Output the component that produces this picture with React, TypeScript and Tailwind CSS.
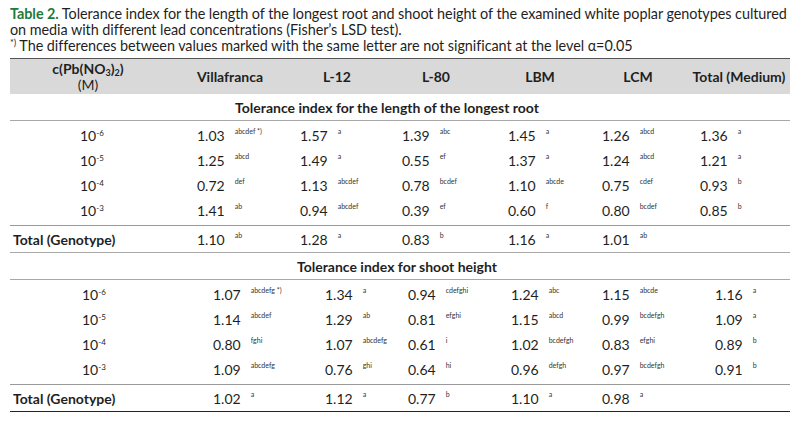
const rootRows = [
  { exp: '-6', vals: [['1.03', 'abcdef *)'], ['1.57', 'a'], ['1.39', 'abc'], ['1.45', 'a'], ['1.26', 'abcd'], ['1.36', 'a']] },
  { exp: '-5', vals: [['1.25', 'abcd'], ['1.49', 'a'], ['0.55', 'ef'], ['1.37', 'a'], ['1.24', 'abcd'], ['1.21', 'a']] },
  { exp: '-4', vals: [['0.72', 'def'], ['1.13', 'abcdef'], ['0.78', 'bcdef'], ['1.10', 'abcde'], ['0.75', 'cdef'], ['0.93', 'b']] },
  { exp: '-3', vals: [['1.41', 'ab'], ['0.94', 'abcdef'], ['0.39', 'ef'], ['0.60', 'f'], ['0.80', 'bcdef'], ['0.85', 'b']] },
];
const rootTotal = [['1.10', 'ab'], ['1.28', 'a'], ['0.83', 'b'], ['1.16', 'a'], ['1.01', 'ab']];

const shootRows = [
  { exp: '-6', vals: [['1.07', 'abcdefg *)'], ['1.34', 'a'], ['0.94', 'cdefghi'], ['1.24', 'abc'], ['1.15', 'abcde'], ['1.16', 'a']] },
  { exp: '-5', vals: [['1.14', 'abcdef'], ['1.29', 'ab'], ['0.81', 'efghi'], ['1.15', 'abcd'], ['0.99', 'bcdefgh'], ['1.09', 'a']] },
  { exp: '-4', vals: [['0.80', 'fghi'], ['1.07', 'abcdefg'], ['0.61', 'i'], ['1.02', 'bcdefgh'], ['0.83', 'efghi'], ['0.89', 'b']] },
  { exp: '-3', vals: [['1.09', 'abcdefg'], ['0.76', 'ghi'], ['0.64', 'hi'], ['0.96', 'defgh'], ['0.97', 'bcdefgh'], ['0.91', 'b']] },
];
const shootTotal = [['1.02', 'a'], ['1.12', 'a'], ['0.77', 'b'], ['1.10', 'a'], ['0.98', 'a']];

// column starts differ between the two halves of the table
const rootCols = ['w-[103px]', 'w-[102px]', 'w-[106px]', 'w-[94px]', 'w-[98px]', 'flex-1'];
const shootCols = ['w-[112px]', 'w-[83px]', 'w-[103px]', 'w-[91px]', 'w-[113px]', 'flex-1'];

function Value({ v, cls }: { v: string[]; cls: string }) {
  return (
    <div className={`${cls} flex items-center`}>
      <span className="text-[14px]">{v[0]}</span>
      <span className="ml-[10px] -mt-[8px] text-[7px] leading-none text-[#333]">{v[1]}</span>
    </div>
  );
}

function Conc({ exp, pl }: { exp: string; pl: string }) {
  return (
    <span className={`${pl} text-[14px]`}>
      10<span className="relative -top-[5px] text-[8px]">{exp}</span>
    </span>
  );
}

function Section({
  title,
  titleCls,
  rows,
  total,
  cols,
  first,
  concPl,
}: {
  title: string;
  titleCls: string;
  rows: { exp: string; vals: string[][] }[];
  total: string[][];
  cols: string[];
  first: string;
  concPl: string;
}) {
  return (
    <>
      <div className={`h-[27px] flex items-center justify-center font-bold text-[14px] border-b-[1.5px] border-[#a8a8a8] ${titleCls}`}>
        {title}
      </div>
      <div className="pt-[2px] pb-[2px] border-b-[1.5px] border-[#9a9a9a]">
        {rows.map((r) => (
          <div key={r.exp} className="h-[25px] flex items-center">
            <div className={`${first} flex`}>
              <Conc exp={r.exp} pl={concPl} />
            </div>
            {r.vals.map((v, i) => (
              <Value key={i} v={v} cls={cols[i]} />
            ))}
          </div>
        ))}
      </div>
      <div className="h-[26px] flex items-center">
        <div className={`${first} pl-[3px] font-bold text-[14px]`}>Total (Genotype)</div>
        {total.map((v, i) => (
          <Value key={i} v={v} cls={cols[i]} />
        ))}
      </div>
    </>
  );
}

export default function App() {
  return (
    <div className="w-[800px] h-[426px] bg-white text-[#1f1f1f] font-['Lato',sans-serif] overflow-hidden">
      <div className="px-[10px] pt-[6px] text-[14.4px] leading-[16px] tracking-[-0.05px] whitespace-nowrap">
        <div className="h-[16px]">
          <span className="font-bold text-[#1e7a3c]">Table 2.</span> Tolerance index for the length of the longest root and shoot
          height of the examined white poplar genotypes cultured
        </div>
        <div className="h-[16px]">on media with different lead concentrations (Fisher’s LSD test).</div>
        <div className="h-[16px]">
          <span className="relative -top-[5px] text-[9px]">*)</span> The differences between values marked with the same letter are
          not significant at the level α=0.05
        </div>
      </div>
      <div className="mx-[10px] mt-[4px] border-t-[1.5px] border-[#555] border-b-[1.5px] border-b-[#222]">
        <div className="h-[35px] bg-[#d9d9d9] flex items-center font-bold text-[14px] leading-[16px]">
          <div className="w-[156px] text-center">
            c(Pb(NO<sub className="text-[9px]">3</sub>)<sub className="text-[9px]">2</sub>)
            <br />
            <span className="font-normal">(M)</span>
          </div>
          <div className="w-[128px] text-center">Villafranca</div>
          <div className="w-[86px] text-center">L-12</div>
          <div className="w-[112px] text-center">L-80</div>
          <div className="w-[96px] text-center">LBM</div>
          <div className="w-[100px] text-center">LCM</div>
          <div className="flex-1 text-center">Total (Medium)</div>
        </div>
        <Section
          title="Tolerance index for the length of the longest root"
          titleCls="pr-[26px]"
          rows={rootRows}
          total={rootTotal}
          cols={rootCols}
          first="w-[187px]"
          concPl="pl-[70px]"
        />
        <div className="border-t-[1.5px] border-[#a8a8a8]">
          <Section
            title="Tolerance index for shoot height"
            titleCls="pr-[6px]"
            rows={shootRows}
            total={shootTotal}
            cols={shootCols}
            first="w-[203px]"
            concPl="pl-[72px]"
          />
        </div>
      </div>
    </div>
  );
}
